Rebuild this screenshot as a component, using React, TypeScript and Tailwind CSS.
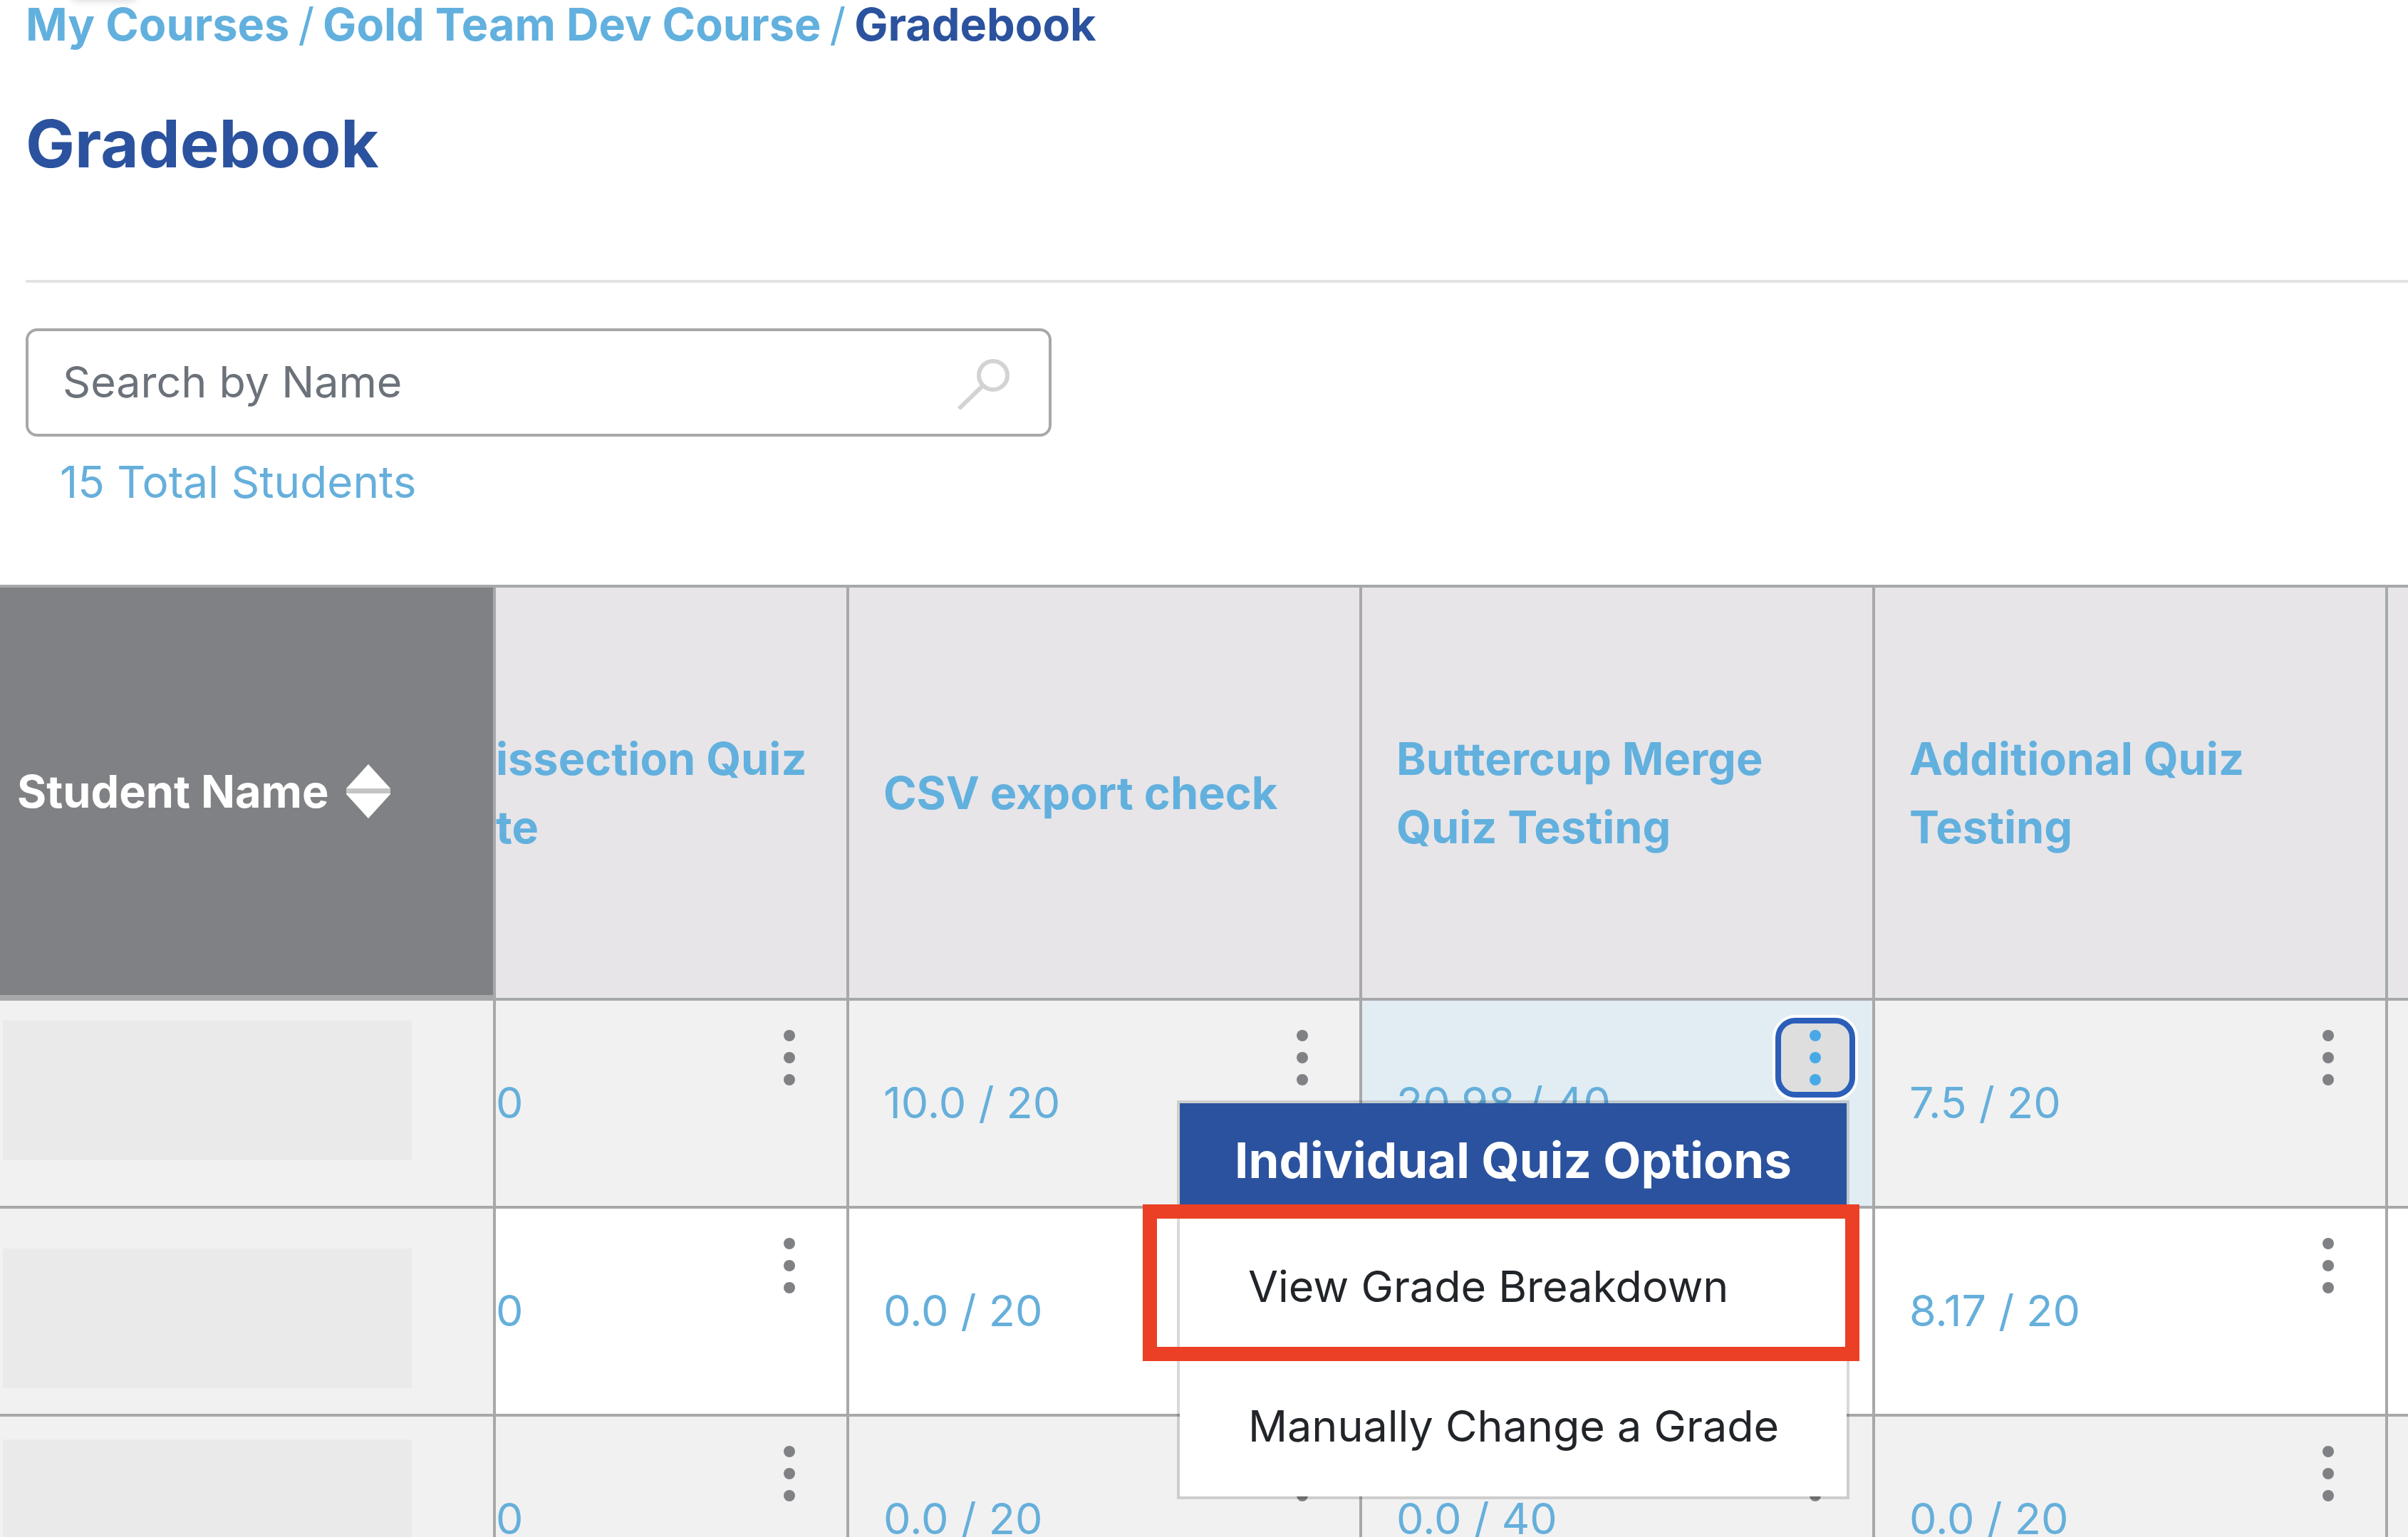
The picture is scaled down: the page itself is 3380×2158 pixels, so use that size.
import React from "react";

const COLUMNS = ["issection Quiz te", "CSV export check", "Buttercup Merge Quiz Testing", "Additional Quiz Testing"];

const ROWS = [
  { block: "top-7", scores: ["0", "10.0 / 20", "20.98 / 40", "7.5 / 20"] },
  { block: "top-14", scores: ["0", "0.0 / 20", "0.0 / 40", "8.17 / 20"] },
  { block: "top-8", scores: ["0", "0.0 / 20", "0.0 / 40", "0.0 / 20"] },
];

function Dots() {
  return (
    <svg viewBox="0 0 16 78" className="h-[78px] w-4" fill="currentColor" aria-hidden="true">
      <circle cx="8" cy="8" r="8" />
      <circle cx="8" cy="39" r="8" />
      <circle cx="8" cy="70" r="8" />
    </svg>
  );
}

function OptionsMenu() {
  return (
    <div role="menu" aria-label="Individual Quiz Options" className="absolute top-[140px] right-8 w-[944px] border-4 border-black/15 bg-white bg-clip-padding">
      <h2 className="bg-[#2b529e] py-6 text-center text-[69px] leading-[112px] font-bold whitespace-nowrap text-white">Individual Quiz Options</h2>
      <button role="menuitem" className="block h-[196px] w-full px-24 text-left whitespace-nowrap text-[#212529]">View Grade Breakdown</button>
      <button role="menuitem" className="block h-[196px] w-full px-24 text-left whitespace-nowrap text-[#212529]">Manually Change a Grade</button>
      <div className="pointer-events-none absolute top-[142px] -right-[18px] -left-[52px] h-[220px] border-20 border-[#eb4026]" />
    </div>
  );
}

export default function App() {
  return (
    <div className="relative h-screen overflow-hidden bg-white font-['Inter','Liberation_Sans',sans-serif] text-[61px]">
      <div className="absolute -top-4 left-[100px] h-4 w-[92px] rounded-full shadow-[0_0_12px_rgba(0,0,0,0.2)]" />
      <header className="pl-9">
        <nav aria-label="Breadcrumb" className="flex gap-3 text-[63px] leading-[68px] font-bold text-[#62b0de]">
          <a href="#courses">My Courses</a>
          <span className="font-normal">/</span>
          <a href="#course">Gold Team Dev Course</a>
          <span className="font-normal">/</span>
          <span className="text-[#2b529e]" aria-current="page">Gradebook</span>
        </nav>
        <h1 className="mt-[76px] text-[92px] leading-[116px] font-bold text-[#2b529e]">Gradebook</h1>
        <hr className="mt-[133px] border-t-4 border-[#e2e3e3]" />
      </header>

      <div className="mt-16 ml-9 flex h-[152px] w-[1440px] items-center rounded-2xl border-4 border-[#a7a8aa] pr-[52px] pl-12">
        <input type="text" aria-label="Search by Name" placeholder="Search by Name" className="min-w-0 grow bg-transparent text-[#212529] outline-none placeholder:text-[#6c727a]" />
        <svg viewBox="0 0 76 76" className="size-[76px]" fill="none" stroke="#d3d3d3" strokeWidth="6" aria-hidden="true">
          <circle cx="50" cy="28" r="20" />
          <path d="M35 43 L2 75" />
        </svg>
      </div>
      <p className="mt-4 ml-[84px] text-[62px] leading-[96px] text-[#66afdb]">15 Total Students</p>

      <table className="mt-24 w-full table-fixed border-separate border-spacing-0">
        <colgroup>
          <col className="w-[696px]" />
          <col className="w-[496px]" />
          <col className="w-[720px]" />
          <col className="w-[720px]" />
          <col className="w-[720px]" />
          <col />
        </colgroup>
        <thead>
          <tr className="h-[584px] text-left text-[63px] leading-[96px] text-[#62b0de]">
            <th scope="col" className="border-t-4 border-r-4 border-b-8 border-[#a7a8aa] bg-[#808184] pl-6 text-white">
              <button className="flex items-center gap-6 font-bold">
                Student Name
                <svg viewBox="0 0 62 76" className="h-[76px] w-[62px]" aria-hidden="true">
                  <path d="M31 0 L62 34 V42 L31 76 L0 42 V34 Z" fill="#fff" />
                  <path d="M0 34 H62 V41 H0 Z" fill="#c4c4c5" />
                </svg>
              </button>
            </th>
            {COLUMNS.map((title, i) => (
              <th key={title} scope="col" className={`border-y-4 border-r-4 border-[#a7a8aa] bg-[#e7e5e8] font-bold ${i === 0 ? "pr-12" : "px-12"}`}>
                <a href="#quiz">{title}</a>
              </th>
            ))}
            <th className="border-y-4 border-[#a7a8aa] bg-[#e7e5e8]" />
          </tr>
        </thead>
        <tbody>
          {ROWS.map((row, r) => (
            <tr key={r} className="h-[292px] odd:bg-[#f1f1f1]">
              <th scope="row" className="relative border-r-4 border-b-4 border-[#a7a8aa] bg-[#f1f1f1]">
                <div className={`absolute left-1 h-[196px] w-[574px] bg-[#eaeaea] ${row.block}`} />
              </th>
              {row.scores.map((score, i) => {
                const open = r === 0 && i === 2;
                return (
                  <td key={i} className={`relative border-r-4 border-b-4 border-[#a7a8aa] text-[#66afdb] ${i === 0 ? "" : "px-12"} ${open ? "z-10 bg-[#e1edf3]" : ""}`}>
                    <a href="#score">{score}</a>
                    <button
                      aria-label="Quiz options"
                      className={`absolute top-6 right-6 flex size-28 items-center justify-center rounded-[28px] ${open ? "border-8 border-[#2b5eb9] bg-[#dedede] text-[#48a9e6] ring-4 ring-white" : "text-[#808184]"}`}
                    >
                      <Dots />
                    </button>
                    {open && <OptionsMenu />}
                  </td>
                );
              })}
              <td className="border-b-4 border-[#a7a8aa]" />
            </tr>
          ))}
        </tbody>
      </table>
    </div>
  );
}
